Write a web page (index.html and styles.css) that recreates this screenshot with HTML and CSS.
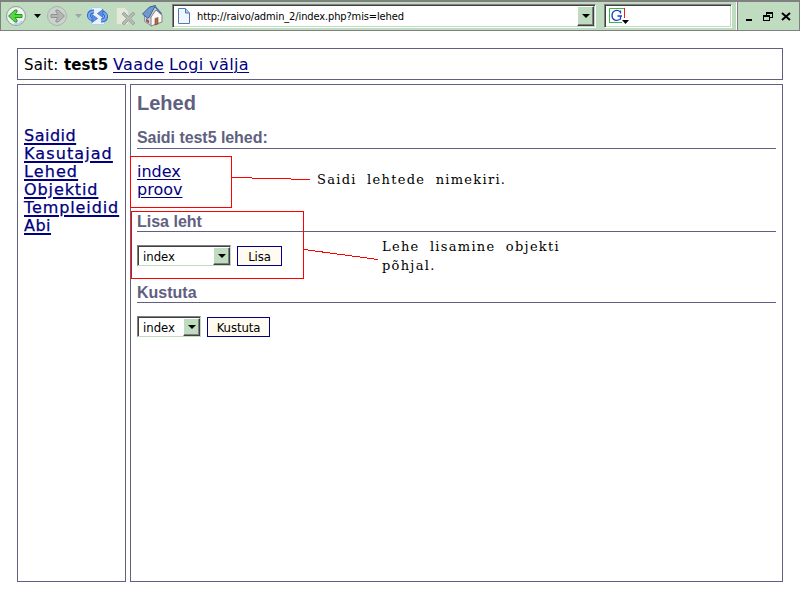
FILE: index.html
```html
<!DOCTYPE html>
<html lang="et">
<head>
<meta charset="utf-8">
<title>Lehed</title>
<link rel="stylesheet" href="styles.css">
</head>
<body>
<header class="toolbar">
  <svg class="icons" width="171" height="28" viewBox="1 2 171 28">
    <circle cx="16" cy="16" r="9.500" fill="#eef3f0" stroke="#8f9c96"/>
    <path d="M22 21a8 8 0 0 1-8 3" fill="none" stroke="#b8cff0" stroke-width="2"/>
    <path d="M8.500 16l6.500-6h2v2l-2 2.500h7v3h-7l2 2.500v2h-2z" fill="#5bd34a" stroke="#1c9a18"/>
    <path d="M34 14h7l-3.500 4z"/>
    <circle cx="57" cy="16" r="9.500" fill="#ccd2cd" stroke="#aab2ac"/>
    <path d="M64.500 16L58 10h-2v2l2 2.500h-7v3h7L56 20v2h2z" fill="#b4b6b6" stroke="#8f9392"/>
    <path d="M75 14h7l-3.500 4z" fill="#9da69f"/>
    <path d="M91.500 7.500h9l4 4v13h-13z" fill="#e8f1ff" stroke="#b3cdf4"/>
    <path d="M94 11.500c-6 0-7 7-1 8" fill="none" stroke="#2e65bd" stroke-width="4"/>
    <path d="M94 11.500c-6 0-7 7-1 8" fill="none" stroke="#78aaf0" stroke-width="2.200"/>
    <path d="M92 14.500l5.500 4-5.500 4z" fill="#5b90df" stroke="#2e65bd" stroke-width=".7"/>
    <path d="M101 20.500c6 0 7-7 1-8" fill="none" stroke="#2e65bd" stroke-width="4"/>
    <path d="M101 20.500c6 0 7-7 1-8" fill="none" stroke="#78aaf0" stroke-width="2.200"/>
    <path d="M103 9.500l-5.500 4 5.500 4z" fill="#5b90df" stroke="#2e65bd" stroke-width=".7"/>
    <path d="M116.500 7.500h8l4 4v13h-12z" fill="#e4ead9" stroke="#d0d7c8"/>
    <path d="M122 14l2-2 4.500 4.500L133 12l2 2-4.500 4.500L135 23l-2 2-4.500-4.500L124 25l-2-2 4.500-4.500z" fill="#b5b9b4" stroke="#9fa59f"/>
    <path d="M144.500 13l7 5v8l-7-4.500z" fill="#c9d3e6" stroke="#8f94a4"/>
    <path d="M151 17l5-7 6 5v7l-11 4z" fill="#fafafa" stroke="#8e7f7a"/>
    <path d="M142.500 14l7-7 6-1.500-6 11-1.500 2z" fill="#7398cf" stroke="#3d5f98"/>
    <path d="M155 6.500l6.500 7.500" fill="none" stroke="#4c6da6" stroke-width="1.600"/>
    <path d="M155 18.500l3-1v6.500l-3 1z" fill="#b06a44" stroke="#7b4734" stroke-width=".6"/>
    <path d="M146 18.500l3 2v3l-3-2z" fill="#9b5c44"/>
  </svg>
  <div class="address">
    <svg width="14" height="17" viewBox="0 0 14 17"><path d="M1.500.5h7l4 4.500v10.500h-11z" fill="#eff6ff" stroke="#5579af"/><path d="M8.500 1v4h4" fill="#a6cdfa" stroke="#5579af"/></svg>
    <span class="url">http://raivo/admin_2/index.php?mis=lehed</span>
    <i class="drop"></i>
  </div>
  <div class="search">
    <svg width="24" height="19" viewBox="0 0 24 19"><path d="M1.500 16V1.500H16" fill="none" stroke="#39b54a"/><path d="M16.500 1v10" stroke="#ed1c24"/><path d="M1 15.500h13" stroke="#39b54a"/><path d="M12.500 6.500V3.500M12.500 5C9 2 4 3.500 4 8.500S9 14.500 12.500 12V9H9.500M11 9h3" fill="none" stroke="#1b43bd" stroke-width="1.300"/><path d="M14 13h7l-3.500 4z"/></svg>
  </div>
  <div class="window">
    <svg width="60" height="28" viewBox="738 2 60 28" shape-rendering="crispEdges"><path d="M746 20h6M766 13h7M763 16h7" stroke="#000" stroke-width="2"/><path d="M766.500 15v-2.500h6v5H770M763.500 15.500h6v5h-6z" fill="none" stroke="#000"/><path d="M782 13l8 7M790 13l-8 7" stroke="#000" stroke-width="2" shape-rendering="auto"/></svg>
  </div>
</header>
<div class="page">
  <div class="top box"><span class="sait">Sait:</span><b>test5</b><a class="vaade">Vaade</a><a class="logi">Logi välja</a></div>
  <div class="columns">
    <nav class="box"><a>Saidid</a><a class="n2">Kasutajad</a><a class="n3">Lehed</a><a class="n4">Objektid</a><a class="n5">Templeidid</a><a>Abi</a></nav>
    <main class="box">
      <h1>Lehed</h1>
      <h2 class="h-list">Saidi test5 lehed:</h2>
      <div class="links"><a>index</a><a>proov</a></div>
      <h2 class="h-add">Lisa leht</h2>
      <div class="form"><div class="select wide"><span>index</span><i class="drop"></i></div><button class="lisa">Lisa</button></div>
      <h2 class="h-del">Kustuta</h2>
      <div class="form"><div class="select"><span>index</span><i class="drop"></i></div><button class="kustuta">Kustuta</button></div>
    </main>
  </div>
</div>
<svg class="marks" width="800" height="600" viewBox="0 0 800 600" shape-rendering="crispEdges">
  <g fill="none" stroke="#f00"><path d="M130.500 156.500h101v51h-101zM131.500 211.500h172v67h-172zM232 177.500L310 179.500M304 249.500L378 259.500"/></g>
</svg>
<p class="note one">Saidi lehtede nimekiri.</p>
<p class="note two">Lehe lisamine objekti<br>põhjal.</p>
</body>
</html>
```

FILE: styles.css
```css
* { box-sizing: border-box; }
body { margin: 0; width: 800px; height: 600px; background: #fff; overflow: hidden; font: 16px/18px "DejaVu Sans", sans-serif; color: #000; }
.toolbar { display: flex; height: 31px; background: #c0dcc0; border: 1px solid #808080; border-top-width: 2px; }
.icons { flex: none; width: 171px; }
.address, .search { flex: none; height: 24px; margin-top: 2px; background: #fff; border: 1px solid #808080; border-right-color: #fff; border-bottom-color: #fff; box-shadow: inset 1px 1px #404040, inset -1px -1px #c0dcc0; display: flex; }
.address { width: 424px; padding: 3px 1px 1px 4px; }
.url { font: 11px/16px "DejaVu Sans Condensed", "DejaVu Sans", sans-serif; font-stretch: condensed; letter-spacing: -0.12px; margin: 1px auto 0 6px; white-space: nowrap; }
.drop { width: 17px; height: 18px; flex: none; background: #c0dcc0; border: 1px solid #fff; border-right-color: #404040; border-bottom-color: #404040; box-shadow: inset -1px -1px #808080; display: flex; align-items: center; justify-content: center; }
.drop::before { content: ""; border: 4px solid transparent; border-top-color: #000; border-bottom: 0; }
.address .drop { height: 20px; margin-top: -2px; }
.search { width: 128px; margin-left: 8px; padding: 2px 3px; }
.window { margin-left: 5px; border-left: 1px solid #808080; box-shadow: -1px 0 #fff; }
.page { padding: 17px; height: 569px; }
.box { border: 1px solid #606080; }
.top { height: 32px; width: 766px; display: flex; padding: 7px 6px; white-space: nowrap; }
.sait { width: 40px; letter-spacing: .15px; font-size: 15px; }
b { width: 49px; font-size: 15px; letter-spacing: .1px; }
a { color: #000080; text-decoration: underline; text-decoration-thickness: 1px; text-underline-offset: 2px; }
.vaade { width: 56px; letter-spacing: .4px; }
.logi { letter-spacing: .4px; }
nav { width: 109px; padding: 42px 6px; display: flex; flex-direction: column; align-items: flex-start; }
nav a { white-space: nowrap; letter-spacing: .5px; text-decoration-thickness: 2px; -webkit-text-stroke: .25px #000080; }
nav .n2, nav .n3 { letter-spacing: 1.1px; }
nav .n4, nav .n5 { letter-spacing: .9px; }
.columns { display: flex; gap: 4px; margin-top: 4px; height: 498px; }
main { width: 653px; padding: 0 6px; }
h1, h2 { margin: 0; font-family: "Liberation Sans", sans-serif; color: #606080; }
h1 { font-size: 20px; line-height: 22px; margin-top: 7px; }
h2 { font-size: 16px; line-height: 18px; height: 19px; border-bottom: 1px solid #606080; }
.h-list { height: 20px; margin-top: 15px; letter-spacing: -.05px; }
.links { display: flex; flex-direction: column; align-items: flex-start; margin-top: 14px; }
.h-add { margin-top: 14px; }
.h-del { margin-top: 16px; }
.form { display: flex; gap: 6px; margin-top: 13px; height: 23px; }
.select { width: 64px; height: 21px; border: 1px solid #808080; border-right-color: #c0dcc0; border-bottom-color: #c0dcc0; box-shadow: inset 1px 1px #404040; display: flex; justify-content: space-between; padding: 1px 0 0 5px; }
.select span { font: 13px/20px "DejaVu Sans Condensed", "DejaVu Sans", sans-serif; font-stretch: condensed; }
.wide { width: 94px; }
button { margin: 1px 0 0; height: 20px; background: #fffbf0; border: 1px solid #000080; padding: 1px 0 0; font: 13px/17px "DejaVu Sans Condensed", "DejaVu Sans", sans-serif; font-stretch: condensed; letter-spacing: -.1px; color: #000; }
.lisa { width: 45px; }
.kustuta { width: 63px; }
.marks { position: absolute; left: 0; top: 0; }
.note { position: absolute; margin: 0; font: 13px/19px "DejaVu Serif", serif; letter-spacing: 1.28px; word-spacing: 5px; white-space: nowrap; }
.one { left: 317px; top: 170px; }
.two { left: 382px; top: 237px; }
```
